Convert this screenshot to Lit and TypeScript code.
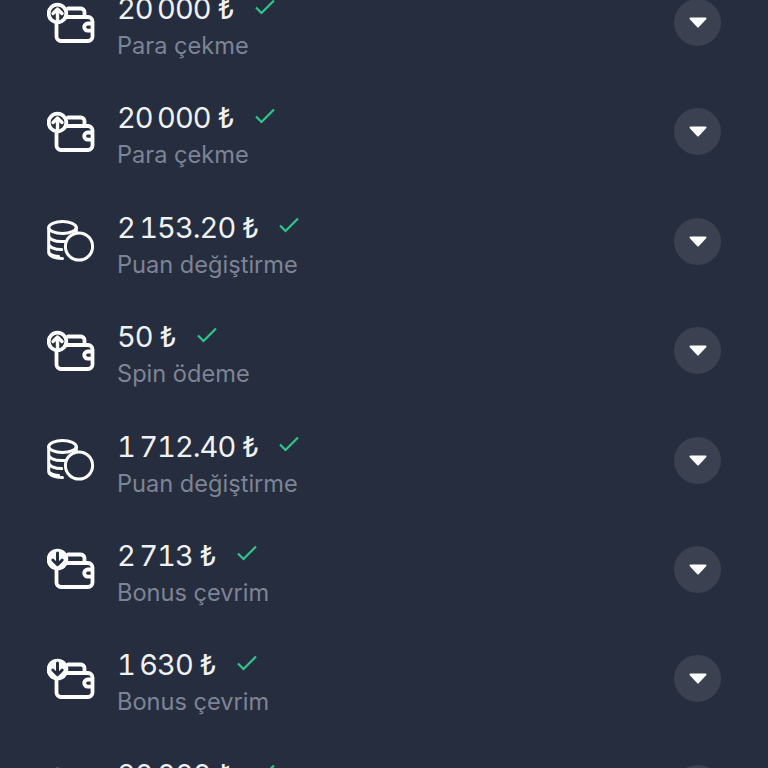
import { LitElement, html, css, svg } from "lit";
import { customElement } from "lit/decorators.js";

type Kind = "out" | "in" | "coins";

interface Tx {
  amount: string;
  label: string;
  kind: Kind;
}

const rows: Tx[] = [
  { amount: "20\u2009000 ₺", label: "Para çekme", kind: "out" },
  { amount: "20\u2009000 ₺", label: "Para çekme", kind: "out" },
  { amount: "2\u2009153.20 ₺", label: "Puan değiştirme", kind: "coins" },
  { amount: "50 ₺", label: "Spin ödeme", kind: "out" },
  { amount: "1\u2009712.40 ₺", label: "Puan değiştirme", kind: "coins" },
  { amount: "2\u2009713 ₺", label: "Bonus çevrim", kind: "in" },
  { amount: "1\u2009630 ₺", label: "Bonus çevrim", kind: "in" },
  { amount: "20\u2009000 ₺", label: "Para çekme", kind: "out" },
];

const wallet = svg`
  <path d="M21 6.5h13a3.5 3.5 0 0 1 3.5 3.5v5M9.5 22v12.5a4.5 4.5 0 0 0 4.5 4.5h27a4.5 4.5 0 0 0 4.5-4.5V19.5a4.5 4.5 0 0 0-4.5-4.5H20" />
  <path d="M45 21.5h-4.2a3.6 3.6 0 0 0 0 7.2H45" />
`;

const icons: Record<Kind, unknown> = {
  out: html`<svg class="icon" viewBox="0 0 48 42" fill="none" stroke="#fff" stroke-width="3.8" stroke-linecap="round" stroke-linejoin="round">
    ${wallet}
    <circle cx="10.5" cy="11.5" r="8.8" fill="#252d3f" />
    <path d="M10.5 18V7.5M6 11.5l4.5-4.5 4.5 4.5" stroke-width="3.4" />
  </svg>`,
  in: html`<svg class="icon" viewBox="0 0 48 42" fill="none" stroke="#fff" stroke-width="3.8" stroke-linecap="round" stroke-linejoin="round">
    ${wallet}
    <circle cx="10.5" cy="11.5" r="10.8" fill="#fff" stroke="none" />
    <path d="M10.5 5v11.5M5.8 12l4.7 4.7 4.7-4.7" stroke="#252d3f" stroke-width="3" />
  </svg>`,
  coins: html`<svg class="icon" viewBox="0 0 48 42" fill="none" stroke="#fff" stroke-width="3" stroke-linecap="round" stroke-linejoin="round">
    <ellipse cx="15.5" cy="7.5" rx="13.8" ry="6" />
    <path d="M1.7 7.5v25c0 3.6 6 6 13.8 6M1.7 15.5c0 3.4 5.5 6 13 6h4M1.7 23.5c0 3.4 5.5 6 13 6M1.7 31.5c0 2.5 4 4.5 10 5M29.3 7.5v9" />
    <circle cx="32" cy="26.5" r="13.6" fill="#252d3f" />
  </svg>`,
};

@customElement("app-root")
export class AppRoot extends LitElement {
  static override styles = css`
    :host {
      display: block;
      width: 768px;
      height: 768px;
      overflow: hidden;
      background: #252d3f;
      font-family: Inter, "Noto Sans", sans-serif;
    }

    .list {
      margin-top: -31.7px;
      padding: 0 47px;
    }

    .row {
      display: flex;
      align-items: center;
      height: 109.4px;
      box-sizing: border-box;
      border-bottom: 1px solid #232b3c;
    }

    .icon {
      width: 48px;
      height: 42px;
      flex: none;
      margin-right: 23px;
    }

    .text {
      flex: 1;
      display: flex;
      flex-direction: column;
      gap: 4px;
      margin-top: 9px;
    }

    .top {
      display: flex;
      align-items: center;
      gap: 21px;
    }

    .amount {
      font-size: 29px;
      line-height: 34px;
      color: #eff1f4;
      font-variant-numeric: tabular-nums;
      margin-left: -1px;
      letter-spacing: -0.95px;
    }

    .check {
      width: 20px;
      height: 16px;
      margin-top: -5px;
    }

    .label {
      font-size: 23.6px;
      line-height: 32px;
      color: #7e8494;
      margin-left: -1px;
    }

    .toggle {
      width: 47px;
      height: 47px;
      border-radius: 50%;
      background: #3b4151;
      flex: none;
      display: flex;
      align-items: center;
      justify-content: center;
    }

    .toggle svg {
      width: 18px;
      height: 11px;
    }
  `;

  override render() {
    return html`<div class="list">
      ${rows.map(
        (r) => html`<div class="row">
          ${icons[r.kind]}
          <div class="text">
            <div class="top">
              <span class="amount">${r.amount}</span>
              <svg class="check" viewBox="0 0 20 16" fill="none" stroke="#2ec68c" stroke-width="2.2">
                <path d="M1 8.5l5.5 5.5L19 1.5" />
              </svg>
            </div>
            <div class="label">${r.label}</div>
          </div>
          <div class="toggle">
            <svg viewBox="0 0 18 11"><path d="M1.5 0.5h15a1 1 0 0 1 .7 1.7l-7.5 8a1 1 0 0 1-1.4 0l-7.5-8a1 1 0 0 1 .7-1.7z" fill="#fff" /></svg>
          </div>
        </div>`
      )}
    </div>`;
  }
}
